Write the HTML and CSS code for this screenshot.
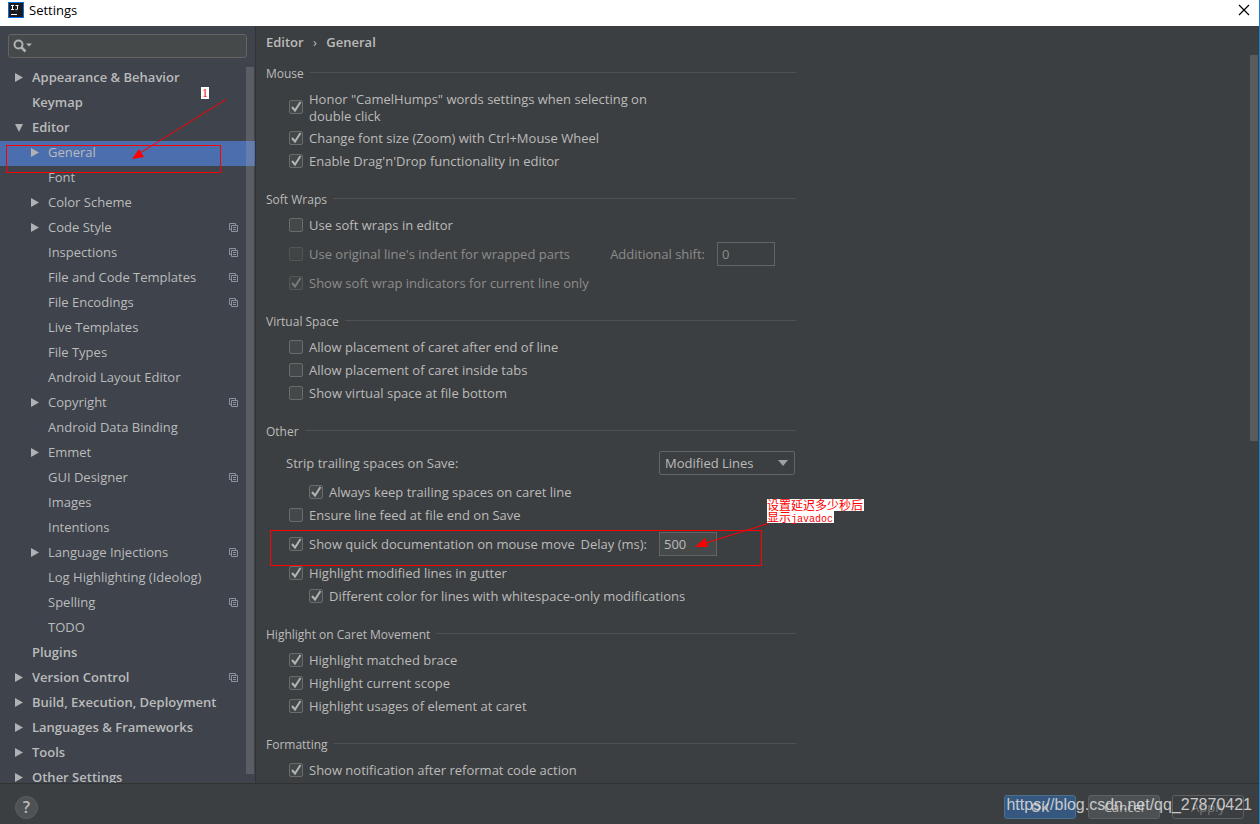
FILE: index.html
```html
<!DOCTYPE html>
<html lang="en">
<head>
    <meta charset="UTF-8">
    <meta name="viewport" content="width=device-width, initial-scale=1.0">
    <title>Settings</title>
    <link rel="stylesheet" href="styles.css">
</head>
<body>
    <svg class="symbols" aria-hidden="true">
        <symbol id="copy" viewBox="0 0 9 9">
            <path d="M2 6.500H.5V.5h6V2M2.500 2.500h6v6h-6zM4 4.500h3M4 6.500h3" fill="none" stroke="#8b949c"/>
        </symbol>
    </svg>

    <header class="titlebar">
        <svg class="logo" viewBox="0 0 16 16" aria-hidden="true">
            <rect width="16" height="16" fill="#0a6ee0"/>
            <rect x="1" y="1" width="14" height="14" fill="#1b1b1f"/>
            <path d="M3 3.500h3M4.500 3.500v4M3 7.500h3M7.500 3.500h3M9.500 3.500v3.500q0 .7-1 .7h-1M3 12.500h6" fill="none" stroke="#fff"/>
        </svg>
        <span class="title">Settings</span>
        <button class="close" type="button" aria-label="Close">
            <svg viewBox="0 0 12 12"><path d="M1 1l10 10M11 1L1 11" stroke="#000" stroke-width="1.200"/></svg>
        </button>
    </header>

    <div class="main">
        <aside class="sidebar">
            <div class="search">
                <svg viewBox="0 0 20 14" aria-hidden="true">
                    <circle cx="5.500" cy="5.500" r="4" fill="none" stroke="#afb1b3" stroke-width="2"/>
                    <path d="M8.500 8.500l4 4" stroke="#afb1b3" stroke-width="2.500"/>
                    <path d="M13 4.500h6l-3 3z" fill="#afb1b3"/>
                </svg>
                <input type="text" aria-label="Search settings">
            </div>
            <nav>
                <ul class="tree">
                    <li><a href="#" class="top closed">Appearance &amp; Behavior</a></li>
                    <li><a href="#" class="top">Keymap</a></li>
                    <li><a href="#" class="top opened">Editor</a></li>
                    <li><a href="#" class="sub closed selected">General</a></li>
                    <li><a href="#" class="sub">Font</a></li>
                    <li><a href="#" class="sub closed">Color Scheme</a></li>
                    <li><a href="#" class="sub closed">Code Style<svg class="copy"><use href="#copy"/></svg></a></li>
                    <li><a href="#" class="sub">Inspections<svg class="copy"><use href="#copy"/></svg></a></li>
                    <li><a href="#" class="sub">File and Code Templates<svg class="copy"><use href="#copy"/></svg></a></li>
                    <li><a href="#" class="sub">File Encodings<svg class="copy"><use href="#copy"/></svg></a></li>
                    <li><a href="#" class="sub">Live Templates</a></li>
                    <li><a href="#" class="sub">File Types</a></li>
                    <li><a href="#" class="sub">Android Layout Editor</a></li>
                    <li><a href="#" class="sub closed">Copyright<svg class="copy"><use href="#copy"/></svg></a></li>
                    <li><a href="#" class="sub">Android Data Binding</a></li>
                    <li><a href="#" class="sub closed">Emmet</a></li>
                    <li><a href="#" class="sub">GUI Designer<svg class="copy"><use href="#copy"/></svg></a></li>
                    <li><a href="#" class="sub">Images</a></li>
                    <li><a href="#" class="sub">Intentions</a></li>
                    <li><a href="#" class="sub closed">Language Injections<svg class="copy"><use href="#copy"/></svg></a></li>
                    <li><a href="#" class="sub">Log Highlighting (Ideolog)</a></li>
                    <li><a href="#" class="sub">Spelling<svg class="copy"><use href="#copy"/></svg></a></li>
                    <li><a href="#" class="sub">TODO</a></li>
                    <li><a href="#" class="top">Plugins</a></li>
                    <li><a href="#" class="top closed">Version Control<svg class="copy"><use href="#copy"/></svg></a></li>
                    <li><a href="#" class="top closed">Build, Execution, Deployment</a></li>
                    <li><a href="#" class="top closed">Languages &amp; Frameworks</a></li>
                    <li><a href="#" class="top closed">Tools</a></li>
                    <li><a href="#" class="top closed">Other Settings</a></li>
                </ul>
            </nav>
            <div class="scrollbar tree-bar"></div>
        </aside>

        <main class="content">
            <h1 class="breadcrumb">Editor <span class="sep">›</span> General</h1>

            <section class="group">
                <h2>Mouse</h2>
                <div class="row two-line"><input type="checkbox" id="camel" checked><label for="camel">Honor "CamelHumps" words settings when selecting on<br>double click</label></div>
                <div class="row"><input type="checkbox" id="zoom" checked><label for="zoom">Change font size (Zoom) with Ctrl+Mouse Wheel</label></div>
                <div class="row"><input type="checkbox" id="drag" checked><label for="drag">Enable Drag'n'Drop functionality in editor</label></div>
            </section>

            <section class="group">
                <h2>Soft Wraps</h2>
                <div class="row"><input type="checkbox" id="wraps"><label for="wraps">Use soft wraps in editor</label></div>
                <div class="row tall disabled">
                    <input type="checkbox" id="indent" disabled><label for="indent">Use original line's indent for wrapped parts</label>
                    <div class="field shift"><label for="shift">Additional shift:</label><input type="text" id="shift" value="0" disabled></div>
                </div>
                <div class="row disabled"><input type="checkbox" id="indicators" checked disabled><label for="indicators">Show soft wrap indicators for current line only</label></div>
            </section>

            <section class="group">
                <h2>Virtual Space</h2>
                <div class="row"><input type="checkbox" id="afterEnd"><label for="afterEnd">Allow placement of caret after end of line</label></div>
                <div class="row"><input type="checkbox" id="insideTabs"><label for="insideTabs">Allow placement of caret inside tabs</label></div>
                <div class="row"><input type="checkbox" id="fileBottom"><label for="fileBottom">Show virtual space at file bottom</label></div>
            </section>

            <section class="group">
                <h2>Other</h2>
                <div class="row tall strip">
                    <label for="strip">Strip trailing spaces on Save:</label>
                    <select id="strip"><option>Modified Lines</option><option>All</option><option>None</option></select>
                </div>
                <div class="row indent"><input type="checkbox" id="keep" checked><label for="keep">Always keep trailing spaces on caret line</label></div>
                <div class="row"><input type="checkbox" id="lineFeed"><label for="lineFeed">Ensure line feed at file end on Save</label></div>
                <div class="row tall">
                    <input type="checkbox" id="quickDoc" checked><label for="quickDoc">Show quick documentation on mouse move</label>
                    <div class="field delay"><label for="delay">Delay (ms):</label><input type="text" id="delay" value="500"></div>
                </div>
                <div class="row"><input type="checkbox" id="gutter" checked><label for="gutter">Highlight modified lines in gutter</label></div>
                <div class="row indent"><input type="checkbox" id="whitespace" checked><label for="whitespace">Different color for lines with whitespace-only modifications</label></div>
            </section>

            <section class="group">
                <h2>Highlight on Caret Movement</h2>
                <div class="row"><input type="checkbox" id="brace" checked><label for="brace">Highlight matched brace</label></div>
                <div class="row"><input type="checkbox" id="scope" checked><label for="scope">Highlight current scope</label></div>
                <div class="row"><input type="checkbox" id="usages" checked><label for="usages">Highlight usages of element at caret</label></div>
            </section>

            <section class="group">
                <h2>Formatting</h2>
                <div class="row"><input type="checkbox" id="reformat" checked><label for="reformat">Show notification after reformat code action</label></div>
            </section>
            <div class="scrollbar content-bar"></div>
        </main>
    </div>

    <footer class="footer">
        <button class="help" type="button" aria-label="Help">?</button>
        <button class="btn primary" type="button">OK</button>
        <button class="btn" type="button">Cancel</button>
        <button class="btn apply" type="button" disabled>Apply</button>
    </footer>

    <!-- red marks drawn over the window -->
    <svg class="marks" aria-hidden="true">
        <g fill="none" stroke="#f00">
            <rect x="6.500" y="145.500" width="214" height="27"/>
            <path d="M226 99.500L140 153"/>
            <rect x="270.500" y="530.500" width="491" height="35"/>
            <path d="M768 523.500L706 543"/>
        </g>
        <path d="M132 159l7-10 5 8z" fill="#f00"/>
        <path d="M695 547l10-9 3 9z" fill="#f00"/>
    </svg>
    <div class="note note-one"><span>1</span></div>
    <div class="note note-delay"><span>设置延迟多少秒后</span><br><span>显示<span class="latin">javadoc</span></span></div>
    <div class="watermark">https://blog.csdn.net/qq_27870421</div>
</body>
</html>
```
FILE: styles.css
```css
* {
    box-sizing: border-box;
}
body {
    position: relative;
    display: flex;
    flex-direction: column;
    height: 100vh;
    margin: 0;
    overflow: hidden;
    border-right: 1px solid #1a7fc4;
    background: #3c3f41;
    color: #bbbbbb;
    font-family: "Open Sans", "Noto Sans CJK SC", sans-serif;
    font-size: 13px;
    line-height: 17px;
}
button, input, select {
    margin: 0;
    font: inherit;
    color: inherit;
}
.symbols {
    display: none;
}

/* title bar */
.titlebar {
    display: flex;
    flex: none;
    align-items: center;
    height: 26px;
    padding: 0 9px 6px 8px;
    background: #fff;
    color: #000;
}
.logo {
    width: 16px;
    height: 16px;
    margin-right: 5px;
}
.close {
    display: flex;
    margin-left: auto;
    padding: 0;
    border: none;
    background: none;
}
.close svg {
    width: 12px;
    height: 12px;
}

.main {
    display: flex;
    flex: 1;
    min-height: 0;
}

/* tree */
.sidebar {
    position: relative;
    flex: none;
    width: 256px;
    padding-top: 8px;
    overflow: hidden;
    background: #3e434c;
    border-right: 1px solid #313335;
}
.search {
    display: flex;
    align-items: center;
    height: 24px;
    margin: 0 8px 8px;
    padding: 0 4px;
    border: 1px solid #646464;
    border-radius: 3px;
    background: #45494a;
}
.search svg {
    flex: none;
    width: 20px;
    height: 14px;
}
.search input {
    flex: 1;
    min-width: 0;
    border: none;
    outline: none;
    background: none;
}
.tree {
    margin: 0;
    padding: 0;
    list-style: none;
}
.tree a {
    display: flex;
    align-items: center;
    height: 25px;
    padding-right: 17px;
    padding-bottom: 2px;
    color: inherit;
    text-decoration: none;
}
.tree a::before {
    content: "";
    width: 8px;
    height: 9px;
    margin-right: 9px;
}
.tree .top {
    padding-left: 15px;
    font-weight: 600;
}
.tree .sub {
    padding-left: 31px;
}
.tree .closed::before {
    background: #afb1b3;
    clip-path: polygon(0 0, 100% 50%, 0 100%);
}
.tree .opened::before {
    background: #afb1b3;
    clip-path: polygon(0 10%, 100% 10%, 50% 100%);
}
.tree .selected {
    background: #4b6eaf;
}
.copy {
    width: 9px;
    height: 9px;
    margin-left: auto;
}
.scrollbar {
    position: absolute;
    width: 8px;
    background: rgba(166, 166, 166, 0.28);
}
.tree-bar {
    top: 41px;
    right: 1px;
    bottom: 9px;
}
.content-bar {
    top: 29px;
    right: 1px;
    height: 51%;
}

/* settings page */
.content {
    position: relative;
    flex: 1;
    padding: 8px 10px 0;
    overflow: hidden;
}
.breadcrumb {
    margin: 0 0 14px;
    font-size: 13px;
    font-weight: 600;
    line-height: 17px;
}
.sep {
    margin: 0 6px;
    font-weight: normal;
}
.group {
    max-width: 530px;
    margin-bottom: 18px;
}
.group h2 {
    display: flex;
    align-items: center;
    gap: 6px;
    margin: 0 0 5px;
    font-size: 12px;
    font-weight: normal;
    line-height: 18px;
}
.group h2::after {
    content: "";
    flex: 1;
    height: 1px;
    margin-bottom: 3px;
    background: #515151;
}
.row {
    display: flex;
    align-items: center;
    height: 23px;
    padding-left: 23px;
    white-space: nowrap;
}
.two-line {
    height: 39px;
}
.tall {
    height: 35px;
    padding-bottom: 1px;
}
.indent {
    padding-left: 43px;
}
.strip {
    justify-content: space-between;
    padding-left: 20px;
    padding-right: 1px;
}
.disabled {
    color: #8c8c8c;
}
input[type="checkbox"] {
    appearance: none;
    flex: none;
    width: 14px;
    height: 14px;
    margin-right: 6px;
    margin-bottom: 2px;
    border: 1px solid #6b6b6b;
    border-radius: 2px;
    background: #43494a;
}
.tall input[type="checkbox"] {
    margin-bottom: 0;
}
input[type="checkbox"]:checked {
    background: #43494a url("data:image/svg+xml,%3Csvg xmlns='http://www.w3.org/2000/svg' viewBox='0 0 12 12'%3E%3Cpath d='M2 6l3 3.500 5.500-8.500' fill='none' stroke='%23b4b4b4' stroke-width='2'/%3E%3C/svg%3E") center / 12px 12px;
}
input[type="checkbox"]:disabled {
    opacity: 0.5;
}
.field {
    display: flex;
    align-items: center;
    gap: 12px;
    margin-left: auto;
}
.shift {
    margin-right: 21px;
}
.delay {
    margin-right: 79px;
}
.field input {
    width: 58px;
    height: 24px;
    padding: 0 4px;
    border: 1px solid #646464;
    background: #45494a;
}
.field input:disabled {
    background: none;
}
select {
    appearance: none;
    width: 136px;
    height: 24px;
    padding: 0 5px;
    border: 1px solid #646464;
    border-radius: 2px;
    background: url("data:image/svg+xml,%3Csvg xmlns='http://www.w3.org/2000/svg' viewBox='0 0 10 6'%3E%3Cpath d='M0 0h10L5 6z' fill='%23a0a0a0'/%3E%3C/svg%3E") no-repeat right 6px center / 10px 6px;
}

/* footer */
.footer {
    display: flex;
    flex: none;
    align-items: center;
    gap: 12px;
    height: 41px;
    padding: 6px 15px 0;
    border-top: 1px solid #323232;
}
.help {
    width: 23px;
    height: 23px;
    margin-right: auto;
    padding: 0;
    border: 1px solid #5e6060;
    border-radius: 50%;
    background: #4e5254;
    font-size: 16px;
    font-weight: 600;
    line-height: 20px;
}
.btn {
    width: 72px;
    height: 24px;
    padding: 0;
    border: 1px solid #5e6060;
    border-radius: 3px;
    background: #4c5052;
}
.primary {
    border-color: #4c708c;
    background: #365880;
    font-weight: 600;
}
.apply {
    background: none;
    color: #777777;
}

/* marks */
.marks {
    position: absolute;
    top: 0;
    left: 0;
    width: 100%;
    height: 100%;
    pointer-events: none;
}
.note {
    position: absolute;
    color: #f00;
    font-family: "Noto Sans CJK SC", sans-serif;
    font-size: 12px;
    line-height: 12px;
}
.note > span {
    display: inline-block;
    height: 12px;
    padding-right: 1px;
    background: #fff;
    vertical-align: top;
}
.note-one {
    top: 87px;
    left: 201px;
    font-family: "Liberation Serif", serif;
}
.note-one > span {
    padding-left: 1px;
}
.note-delay {
    top: 499px;
    left: 767px;
}
.latin {
    font-family: "Liberation Mono", monospace;
    font-size: 10px;
}
.watermark {
    position: absolute;
    right: 7px;
    bottom: 9px;
    color: rgba(225, 225, 225, 0.85);
    font-family: "Liberation Sans", Arial, sans-serif;
    font-size: 16px;
    line-height: 20px;
    pointer-events: none;
}
```
